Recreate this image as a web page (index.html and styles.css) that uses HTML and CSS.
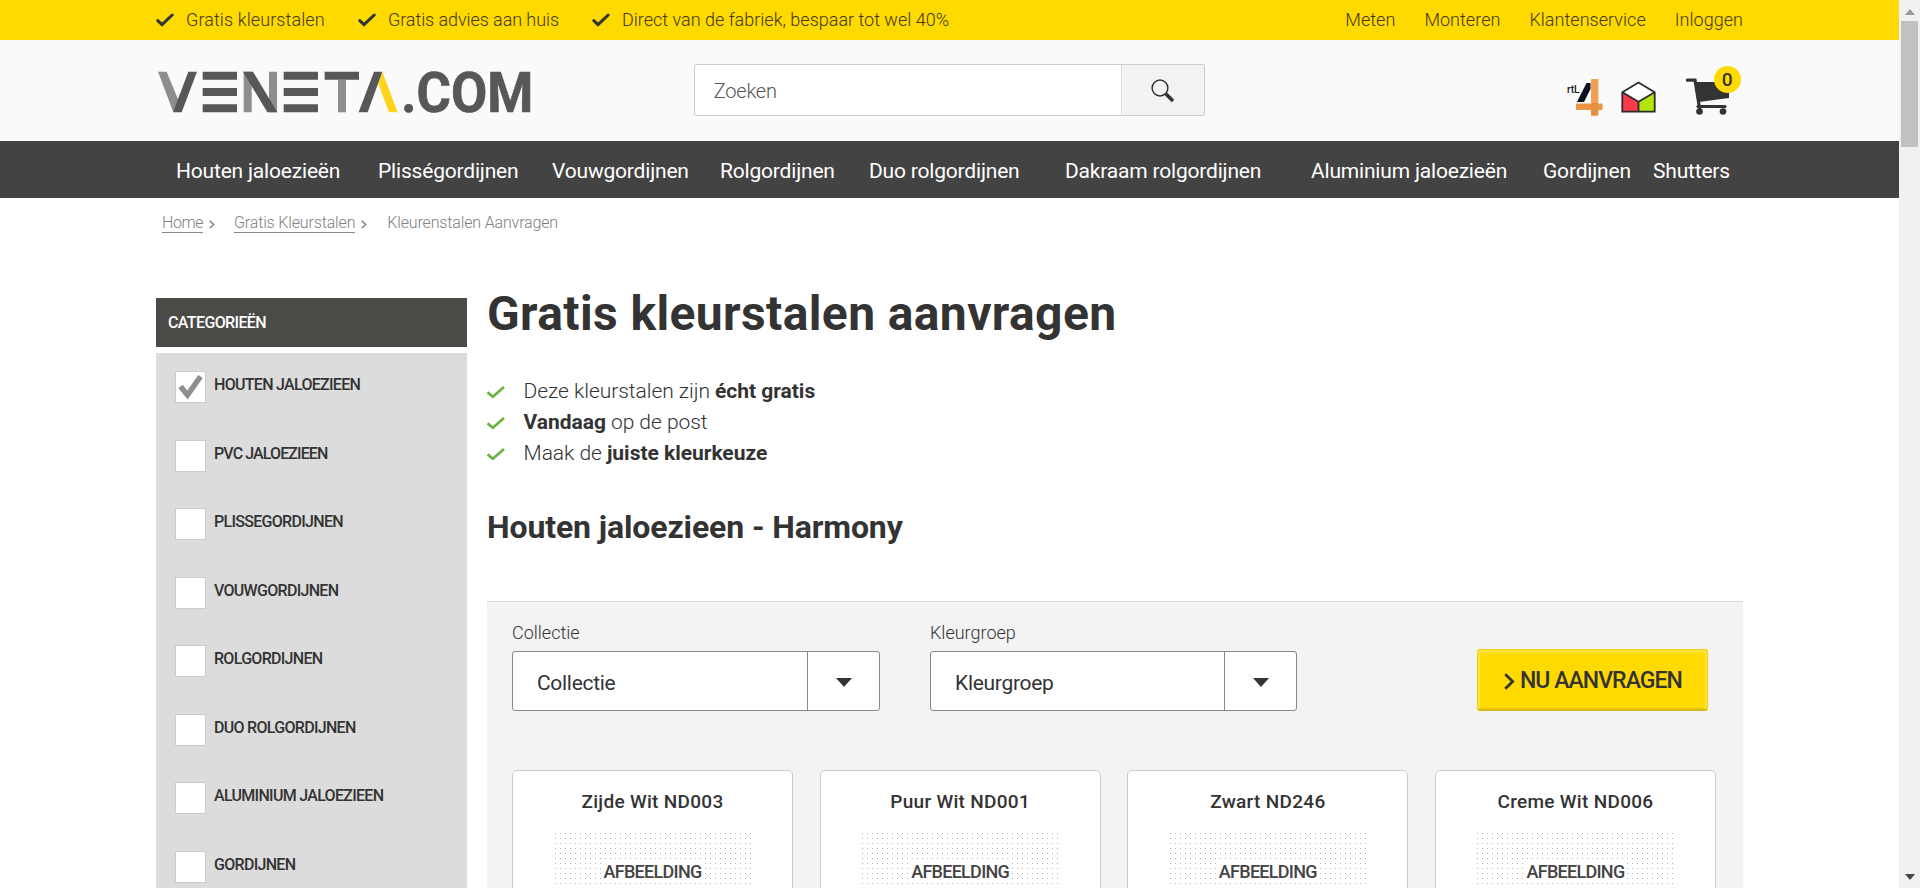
FILE: index.html
```
<!DOCTYPE html>
<html lang="nl">
<head>
<meta charset="utf-8">
<title>Gratis kleurstalen aanvragen</title>
<link rel="stylesheet" href="styles.css">
</head>
<body>
<svg class="defs" width="0" height="0" aria-hidden="true">
  <symbol id="tick" viewBox="0 0 18 14"><path d="M1.8 7.6 6 11.6 16.2 2" fill="none" stroke="currentColor" stroke-width="3" stroke-linecap="round"/></symbol>
  <symbol id="tick-thin" viewBox="0 0 18 14"><path d="M.6 7.4 5.8 11.8 17 2" fill="none" stroke="currentColor" stroke-width="2.7"/></symbol>
  <symbol id="chevron" viewBox="0 0 10 16"><path d="M1 1.2 8 8 1 14.8" fill="none" stroke="currentColor" stroke-width="2.6"/></symbol>
</svg>
<div class="window">
  <div class="page">
    <div class="topbar">
      <div class="wrap topbar-row">
        <ul class="usps">
          <li class="usp-a"><svg class="usp-tick"><use href="#tick"/></svg>Gratis kleurstalen</li>
          <li class="usp-b"><svg class="usp-tick"><use href="#tick"/></svg>Gratis advies aan huis</li>
          <li><svg class="usp-tick"><use href="#tick"/></svg>Direct van de fabriek, bespaar tot wel 40%</li>
        </ul>
        <div class="toplinks"><a>Meten</a><a>Monteren</a><a>Klantenservice</a><a>Inloggen</a></div>
      </div>
    </div>
    <header class="header">
      <div class="wrap header-row">
        <svg class="logo" viewBox="48 208 1130 132" role="img" aria-label="VENETA.COM">
          <g class="logo-light">
            <path d="M54 213h26l35 85-15 37z"/><path d="M311 213h24v122h-24zM387 213h24v122h-24z"/><path d="M594 237h24v98h-24z"/>
          </g>
          <path class="logo-sun" d="M727 213l46 122h-26l-33-88z"/>
          <g class="logo-dark">
            <path d="M145 213h26l-46 122H99z"/>
            <path d="M188 213h103v24H188zM188 262h103v24H188zM188 311h103v24H188z"/>
            <path d="M309 213h30l73 122h-30z"/>
            <path d="M431 213h103v24H431zM431 262h103v24H431zM431 311h103v24H431z"/>
            <path d="M554 213h103v24H554z"/><path d="M702 213h25l-44 122h-27z"/>
            <text class="logo-text" x="784" y="334" textLength="396" lengthAdjust="spacingAndGlyphs">.COM</text>
          </g>
        </svg>
        <div class="search">
          <span class="search-text">Zoeken</span>
          <span class="search-btn"><svg width="26" height="26" viewBox="0 0 26 26"><circle cx="10" cy="10" r="7.9" fill="none" stroke="#333" stroke-width="1.5"/><path d="M15.8 15.8 23 23" stroke="#333" stroke-width="3.6"/></svg></span>
        </div>
        <div class="badges">
          <svg class="rtl" width="37" height="39" viewBox="0 0 37 39"><text x="0" y="15" class="rtl-text" textLength="12.500" lengthAdjust="spacingAndGlyphs">rtL</text><path d="M19.5 5h4v6l-6.500 13h-7z" fill="#0b1020"/><rect x="24" y="1" width="7.4" height="24" rx="1" fill="#f0a055"/><rect x="9" y="25.5" width="26.500" height="6.4" rx="1" fill="#ec9442"/><rect x="24" y="25" width="7.4" height="12.8" rx="1" fill="#e68f40"/></svg>
          <svg class="home" width="36" height="33" viewBox="0 0 36 33"><path d="M1.5 11.5 17.5 20.5V30.5H1.5z" fill="#fb3b4b"/><path d="M33.5 11.5 17.5 20.5V30.5H33.5z" fill="#b3e60d"/><path d="M17.5 2 33.5 11.500 17.5 20.700 1.500 11.500z" fill="#fff"/><path d="M17.5 1.5 33.7 11.2V30.7H1.3V11.2zM1.3 11.2 17.5 20.7 33.7 11.2M17.5 20.7V30.7" fill="none" stroke="#2b2b2b" stroke-width="1.8"/></svg>
          <div class="cart">
            <svg width="44" height="38" viewBox="0 0 44 38"><path d="M1.5 2.2H9L13.5 30" fill="none" stroke="#333" stroke-width="3.2" stroke-linecap="round"/><path d="M9.5 4H43v16L13 24z" fill="#333"/><path d="M12 28.5H39" stroke="#333" stroke-width="3.2" stroke-linecap="round"/><circle cx="13.5" cy="33.5" r="3.3" fill="#333"/><circle cx="37" cy="33.5" r="3.3" fill="#333"/></svg>
            <span class="count">0</span>
          </div>
        </div>
      </div>
    </header>
    <nav class="nav">
      <div class="wrap nav-row"><a>Houten jaloezieën</a><a>Plisségordijnen</a><a>Vouwgordijnen</a><a>Rolgordijnen</a><a>Duo rolgordijnen</a><a>Dakraam rolgordijnen</a><a>Aluminium jaloezieën</a><a>Gordijnen</a><a>Shutters</a></div>
    </nav>
    <div class="wrap crumbs">
      <a>Home</a><svg><use href="#chevron"/></svg><a>Gratis Kleurstalen</a><svg><use href="#chevron"/></svg><span>Kleurenstalen Aanvragen</span>
    </div>
    <div class="wrap columns">
      <aside class="side">
        <div class="side-head">CATEGORIEËN</div>
        <ul class="cats">
          <li><span class="box"><svg width="28" height="28" viewBox="0 0 28 28"><path d="M4.500 14.500 11.500 23 24.500 4.500" fill="none" stroke="#8f8f8f" stroke-width="5.500"/></svg></span>HOUTEN JALOEZIEEN</li>
          <li><span class="box"></span><span class="tight">PVC JALOEZIEEN</span></li>
          <li><span class="box"></span>PLISSEGORDIJNEN</li>
          <li><span class="box"></span>VOUWGORDIJNEN</li>
          <li><span class="box"></span>ROLGORDIJNEN</li>
          <li><span class="box"></span>DUO ROLGORDIJNEN</li>
          <li><span class="box"></span>ALUMINIUM JALOEZIEEN</li>
          <li><span class="box"></span>GORDIJNEN</li>
        </ul>
      </aside>
      <main class="main">
        <h1>Gratis kleurstalen aanvragen</h1>
        <ul class="benefits">
          <li><svg><use href="#tick-thin"/></svg><span>Deze kleurstalen zijn <b>écht gratis</b></span></li>
          <li><svg><use href="#tick-thin"/></svg><span><b>Vandaag</b> op de post</span></li>
          <li><svg><use href="#tick-thin"/></svg><span>Maak de <b>juiste kleurkeuze</b></span></li>
        </ul>
        <h2>Houten jaloezieen - Harmony</h2>
        <section class="panel">
          <div class="filters">
            <div class="field"><label>Collectie</label><div class="select"><span>Collectie</span><i></i></div></div>
            <div class="field"><label>Kleurgroep</label><div class="select"><span>Kleurgroep</span><i></i></div></div>
            <a class="cta"><svg><use href="#chevron"/></svg>NU AANVRAGEN</a>
          </div>
          <div class="cards">
            <article class="card"><h3>Zijde Wit ND003</h3><div class="swatch"><span>AFBEELDING</span></div></article>
            <article class="card"><h3>Puur Wit ND001</h3><div class="swatch"><span>AFBEELDING</span></div></article>
            <article class="card"><h3>Zwart ND246</h3><div class="swatch"><span>AFBEELDING</span></div></article>
            <article class="card"><h3>Creme Wit ND006</h3><div class="swatch"><span>AFBEELDING</span></div></article>
          </div>
        </section>
      </main>
    </div>
  </div>
  <div class="scrollbar"><i class="up"></i><i class="thumb"></i><i class="down"></i></div>
</div>
</body>
</html>
```
FILE: styles.css
```
* { box-sizing: border-box; }
body { margin: 0; font-family: Roboto, "Liberation Sans", sans-serif; color: #333; background: #fff; }
ul, h1, h2, h3 { margin: 0; padding: 0; list-style: none; }
svg { flex: none; display: block; }
.defs { position: absolute; }
.window { display: grid; grid-template-columns: 1fr 21px; height: 888px; overflow: hidden; }
.page { height: 888px; overflow: hidden; }
.wrap { margin: 0 156px; }

.topbar { height: 40px; background: #ffda00; color: #43370e; font-size: 18px; font-weight: 300; line-height: 40px; }
.topbar-row, .usps, .usps li, .toplinks { display: flex; align-items: center; }
.topbar-row { justify-content: space-between; height: 40px; }
.usp-tick { width: 18px; height: 14px; margin-right: 12px; color: #333; }
.usp-a { width: 202px; letter-spacing: .1px; }
.usp-b { width: 234px; letter-spacing: -.08px; }
.toplinks { gap: 29px; letter-spacing: .03px; }

.header { height: 101px; background: #fafafa; }
.header-row { display: flex; height: 101px; align-items: flex-start; }
.logo { width: 376.67px; height: 44px; margin-top: 29.7px; overflow: visible; }
.logo-light { fill: #8d8d8d; }
.logo-dark { fill: #575757; }
.logo-sun { fill: #ffd51c; }
.logo-text { font: 700 167px Roboto, sans-serif; stroke: #575757; stroke-width: 2px; }
.search { display: flex; width: 511px; height: 52px; margin: 24px 0 0 161px; border: 1px solid #ccc; border-radius: 2px; background: #fff; }
.search-text { flex: 1; padding-left: 19px; font-size: 20px; font-weight: 300; line-height: 53px; letter-spacing: -.2px; color: #555; }
.search-btn { width: 83px; padding: 13px 0 0 28px; border-left: 1px solid #ddd; background: #f3f3f3; }
.search-text, .search-btn { height: 50px; }
.badges { display: flex; margin-left: 362px; }
.rtl { margin-top: 38px; }
.rtl-text { font: 500 10px Roboto, sans-serif; fill: #111; }
.home { margin: 41px 0 0 17px; }
.cart { position: relative; margin: 38px 0 0 29px; }
.count { position: absolute; left: 28px; top: -12px; width: 27px; height: 27px; border-radius: 50%; background: #ffda00; color: #333; font-size: 19px; font-weight: 500; line-height: 27px; text-align: center; }

.nav { height: 57px; background: #434343; color: #fff; }
.nav-row { display: grid; grid-template-columns: 202px 174px 168px 149px 196px 246px 232px 110px 1fr; padding-left: 20px; font-size: 21px; line-height: 60px; letter-spacing: -.19px; white-space: nowrap; }

.crumbs { display: flex; align-items: flex-start; height: 100px; padding: 16px 0 0 6px; color: #808080; font-size: 16px; font-weight: 300; line-height: 18px; letter-spacing: -.15px; }
.crumbs a { border-bottom: 1px solid #888; }
.crumbs a:first-child { letter-spacing: -.44px; }
.crumbs svg { width: 6px; height: 9px; margin: 6px 19px 0 6px; }
.crumbs svg ~ svg { margin-right: 20px; }

.columns { display: grid; grid-template-columns: 311px 1256px; gap: 20px; }
.side-head { height: 49px; padding-left: 12px; background: #4a4a47; color: #fff; font-size: 16px; font-weight: 500; line-height: 50px; letter-spacing: -.62px; }
.cats { height: 560px; margin-top: 6px; padding: 18px 0 0 19px; background: #dcdcdc; }
.cats li { display: flex; height: 68.5px; color: #333; font-size: 16px; font-weight: 500; line-height: 27px; letter-spacing: -.7px; }
.cats .tight { letter-spacing: -.9px; }
.box { width: 31px; height: 32px; margin-right: 8px; border: 1px solid #ccc; background: #fff; }

h1 { height: 79px; font-size: 48px; line-height: 32px; letter-spacing: .38px; }
.benefits { height: 92px; margin-top: -1px; font-size: 21px; font-weight: 300; line-height: 31px; letter-spacing: -.04px; }
.benefits li { display: flex; height: 31px; }
.benefits b { font-weight: 700; letter-spacing: -.03px; }
.benefits svg { width: 18px; height: 14px; margin: 9px 19px 0 0; color: #69b443; }
.benefits span { margin-left: -.5px; }
h2 { height: 133px; padding-top: 39px; font-size: 32px; line-height: 40px; letter-spacing: -.12px; }
.main h1, .main h2 { white-space: nowrap; }
.panel { height: 300px; padding: 19px 27px 0 25px; border-top: 1px solid #ddd; background: #f3f3f3; }
.filters { display: flex; height: 149px; }
.field { width: 368px; margin-right: 50px; }
.field + .field { width: 367px; margin-right: 180px; }
.field label { display: block; height: 30px; font-size: 18px; font-weight: 300; line-height: 23px; }
.select { display: grid; grid-template: 58px / 1fr 72px; height: 60px; border: 1px solid #888; border-radius: 3px; background: #fff; }
.select span { padding-left: 24px; font-size: 21px; line-height: 62px; letter-spacing: -.3px; }
.select i { display: grid; place-items: center; border-left: 1px solid #888; }
.select i::after { content: ""; margin-top: 3px; border: solid transparent; border-width: 9px 8.5px 0; border-top-color: #333; }
.cta { display: flex; flex: none; align-items: center; width: 231px; height: 62px; margin-top: 28px; padding: 1px 0 0 26px; border: 1px solid #f0cd10; border-bottom: 2px solid #d9b90a; border-radius: 3px; background: #ffda00; box-shadow: inset 0 3px 0 #ffe23a, inset 2px 0 0 #ffe23a, inset -2px 0 0 #ffe23a, inset 0 -1px 0 #e8c810; font-size: 23px; font-weight: 500; letter-spacing: -.95px; white-space: nowrap; }
.cta svg { width: 11px; height: 17px; margin: 2px 5px 0 0; }
.cards { display: grid; grid-template-columns: repeat(4, 281px); justify-content: space-between; }
.card { height: 300px; border: 1px solid #ccc; border-radius: 5px; background: #fff; }
.card h3 { height: 61px; padding-top: 16px; font-size: 19px; font-weight: 500; line-height: 30px; letter-spacing: .3px; text-align: center; }
.swatch { width: 200px; height: 200px; margin: 0 auto; padding-top: 30px; background: radial-gradient(circle at 2.5px 1.5px, #b0b0b0 .5px, transparent .9px) 0 0 / 5px 5px #fff; text-align: center; }
.swatch span { display: inline-block; background: #fff; color: #444; font-size: 18px; font-weight: 500; line-height: 20px; letter-spacing: -.72px; }

.scrollbar { position: relative; background: #f1f1f1; }
.scrollbar i { position: absolute; }
.thumb { left: 2px; top: 21px; width: 17px; height: 126px; background: #c1c1c1; }
.up, .down { left: 6px; border: solid transparent; }
.up { top: 9px; border-width: 0 5px 6px; border-bottom-color: #999; }
.down { top: 874px; border-width: 6px 5px 0; border-top-color: #444; }
```
